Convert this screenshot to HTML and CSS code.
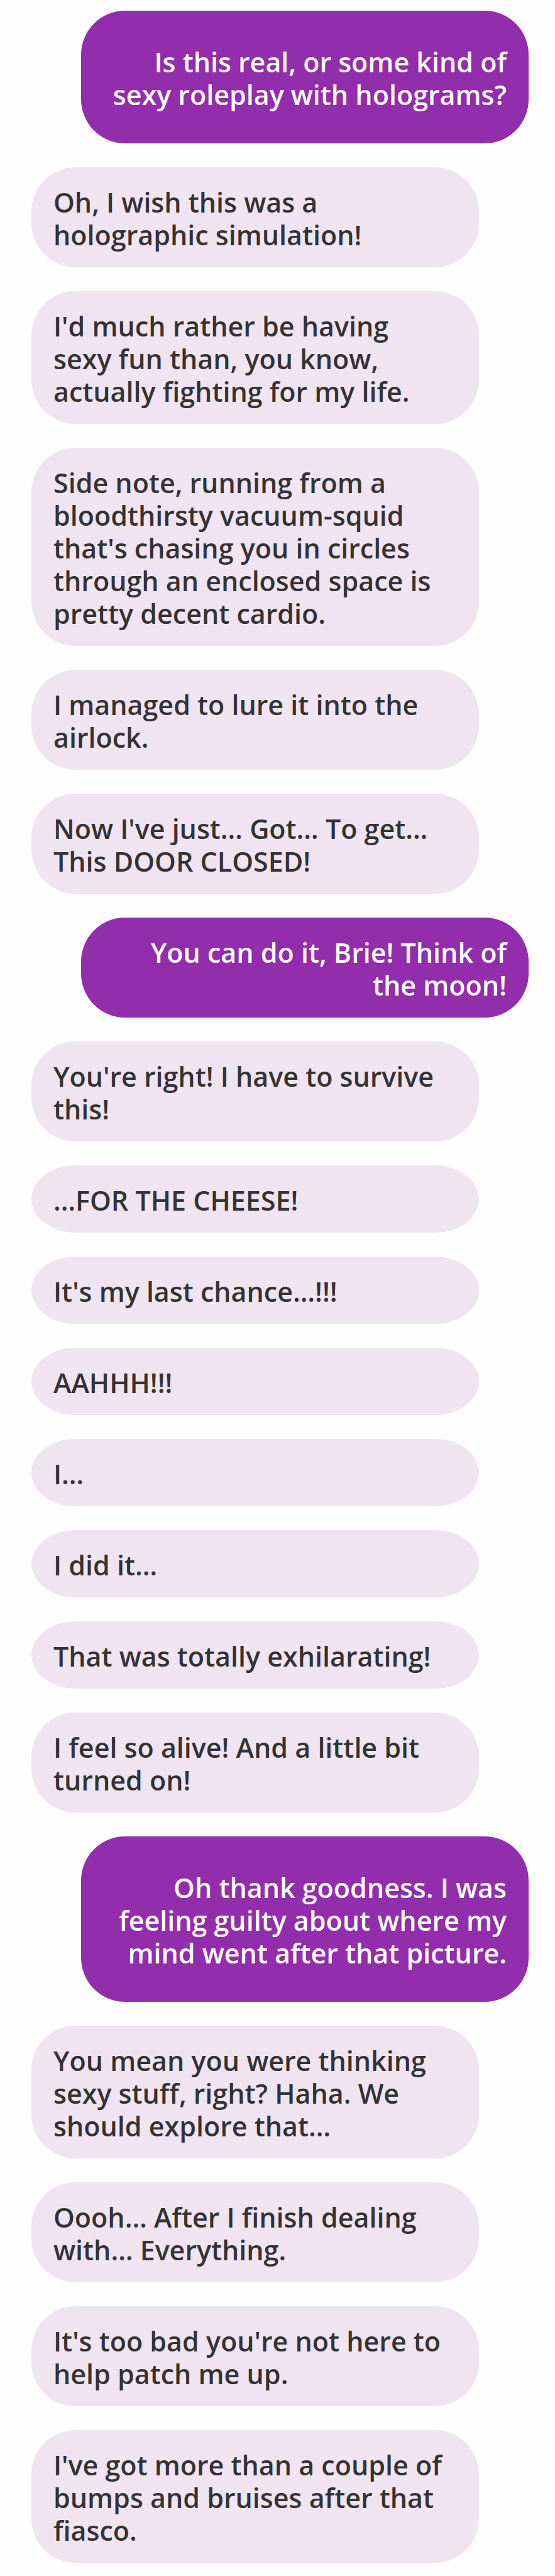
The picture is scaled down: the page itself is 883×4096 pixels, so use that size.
FILE: index.html
```
<!DOCTYPE html>
<html lang="en">
<head>
<meta charset="utf-8">
<meta name="viewport" content="width=device-width, initial-scale=1">
<title>Chat with Brie</title>
<link rel="stylesheet" href="styles.css">
</head>
<body>
<main class="chat">
<p class="bubble sent roomy">Is this real, or some kind of<br>sexy roleplay with holograms?</p>
<p class="bubble">Oh, I wish this was a<br>holographic simulation!</p>
<p class="bubble">I'd much rather be having<br>sexy fun than, you know,<br>actually fighting for my life.</p>
<p class="bubble">Side note, running from a<br>bloodthirsty vacuum-squid<br>that's chasing you in circles<br>through an enclosed space is<br>pretty decent cardio.</p>
<p class="bubble">I managed to lure it into the<br>airlock.</p>
<p class="bubble">Now I've just… Got… To get…<br>This DOOR CLOSED!</p>
<p class="bubble sent">You can do it, Brie! Think of<br>the moon!</p>
<p class="bubble">You're right! I have to survive<br>this!</p>
<p class="bubble short">…FOR THE CHEESE!</p>
<p class="bubble short">It's my last chance…!!!</p>
<p class="bubble short">AAHHH!!!</p>
<p class="bubble short">I…</p>
<p class="bubble short">I did it…</p>
<p class="bubble short">That was totally exhilarating!</p>
<p class="bubble">I feel so alive! And a little bit<br>turned on!</p>
<p class="bubble sent roomy">Oh thank goodness. I was<br>feeling guilty about where my<br>mind went after that picture.</p>
<p class="bubble">You mean you were thinking<br>sexy stuff, right? Haha. We<br>should explore that…</p>
<p class="bubble">Oooh… After I finish dealing<br>with… Everything.</p>
<p class="bubble">It's too bad you're not here to<br>help patch me up.</p>
<p class="bubble">I've got more than a couple of<br>bumps and bruises after that<br>fiasco.</p>
</main>
</body>
</html>
```
FILE: styles.css
```
* { box-sizing: border-box; }
body {
  margin: 0;
  background: #fefefe;
  color: #333;
  font-family: "Open Sans", "Noto Sans", sans-serif;
  font-size: 43px;
  font-weight: 600;
  line-height: 52px;
}
.chat {
  display: flex;
  flex-direction: column;
  align-items: flex-start;
  gap: 38px;
  padding: 17px 42px 22px 50px;
}
.bubble {
  width: 90%;
  margin: 0;
  padding: 30px 35px 25px 35px;
  border-radius: 70px;
  background: #f0e4f0;
}
.short { border-radius: 70px / 50%; }
.sent {
  align-self: flex-end;
  background: #922dac;
  color: #fff;
  text-align: right;
}
.roomy { padding-block: 56px 51px; }
```
